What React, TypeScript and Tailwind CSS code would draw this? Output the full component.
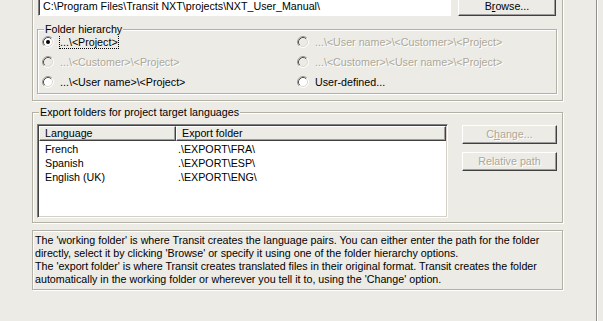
import React from 'react';

const PANEL = '#ecebe6';

const Radio = ({ checked = false, disabled = false }: { checked?: boolean; disabled?: boolean }) => (
  <svg width="12" height="12" viewBox="0 0 12 12" className="shrink-0">
    <circle cx="6" cy="6" r="5" fill={disabled ? PANEL : '#fff'} />
    <path d="M2.11 9.89 A5.5 5.5 0 0 1 9.89 2.11" fill="none" stroke="#9a9a9a" />
    <path d="M2.82 9.18 A4.5 4.5 0 0 1 9.18 2.82" fill="none" stroke="#505050" />
    <path d="M9.89 2.11 A5.5 5.5 0 0 1 2.11 9.89" fill="none" stroke="#fff" />
    <path d="M9.18 2.82 A4.5 4.5 0 0 1 2.82 9.18" fill="none" stroke="#dcdad2" />
    {checked && <circle cx="6" cy="6" r="2" fill="#000" />}
  </svg>
);

const Option = ({ label, checked, disabled, focused }: { label: string; checked?: boolean; disabled?: boolean; focused?: boolean }) => (
  <div className="flex items-center gap-[5px] h-[20px]">
    <Radio checked={checked} disabled={disabled} />
    <span
      className={`whitespace-nowrap border leading-[12px] ${focused ? 'border-dotted border-black' : 'border-transparent'} ${
        disabled ? 'text-[#aca899] [text-shadow:1px_1px_0_#fff]' : 'text-black'
      }`}
    >
      {label}
    </span>
  </div>
);

const etched = 'border border-[#b3b0a6] shadow-[inset_1px_1px_0_#fff,1px_1px_0_#fff]';
const raised =
  'border border-t-white border-l-white border-b-[#404040] border-r-[#404040] shadow-[inset_-1px_-1px_0_#9d9d9d]';

const rows = [
  { lang: 'French', folder: '.\\EXPORT\\FRA\\' },
  { lang: 'Spanish', folder: '.\\EXPORT\\ESP\\' },
  { lang: 'English (UK)', folder: '.\\EXPORT\\ENG\\' },
];

export default function App() {
  return (
    <div className="w-[603px] h-[321px] overflow-hidden bg-[#ecebe6] flex text-[10.7px] leading-[13px] text-black font-['Liberation_Sans',Arial,sans-serif]">
      <div className="w-[597px] h-full shrink-0 border-r border-r-[#8f8f8f] pl-[32px] pr-[33px]">
        {/* working folder */}
        <div className={`-mt-[20px] pt-[15px] pb-[6px] ${etched}`}>
          <div className="flex items-end gap-[7px] ml-[5px] h-[20px]">
            <div className="w-[413px] h-[20px] bg-white border border-t-[#808080] border-l-[#808080] border-b-white border-r-white shadow-[inset_1px_1px_0_#404040] flex items-center pl-[4px] pt-[1px] whitespace-nowrap">
              {'C:\\Program Files\\Transit NXT\\projects\\NXT_User_Manual\\'}
            </div>
            <div className={`w-[98px] h-[20px] flex items-center justify-center pt-[1px] ${raised}`}>
              B<span className="underline">r</span>owse...
            </div>
          </div>

          <div className={`relative mt-[13px] ml-[4px] mr-[5px] pt-[2px] pb-[1px] pl-[4px] ${etched}`}>
            <span className="absolute -top-[7px] left-[6px] px-[1px] bg-[#ecebe6]">Folder hierarchy</span>
            <div className="grid grid-cols-[255px_1fr]">
              <Option label={'...\\<Project>'} checked focused />
              <Option label={'...\\<User name>\\<Customer>\\<Project>'} disabled />
              <Option label={'...\\<Customer>\\<Project>'} disabled />
              <Option label={'...\\<Customer>\\<User name>\\<Project>'} disabled />
              <Option label={'...\\<User name>\\<Project>'} />
              <Option label="User-defined..." />
            </div>
          </div>
        </div>

        {/* export folders */}
        <div className={`relative mt-[11px] pt-[11px] pb-[4px] ${etched}`}>
          <span className="absolute -top-[7px] left-[6px] px-[1px] bg-[#ecebe6]">Export folders for project target languages</span>
          <div className="flex items-start">
            <div className="ml-[4px] w-[411px] h-[94px] bg-white border border-t-[#808080] border-l-[#808080] border-b-white border-r-white shadow-[inset_1px_1px_0_#404040,inset_-1px_-1px_0_#d4d0c8] p-[1px]">
              <div className="flex h-[15px] bg-[#ecebe6]">
                <div className={`w-[137px] pl-[5px] flex items-center ${raised}`}>Language</div>
                <div className={`flex-1 pl-[5px] flex items-center ${raised}`}>Export folder</div>
              </div>
              <div className="pt-[1px]">
                {rows.map((r) => (
                  <div key={r.lang} className="flex h-[14px] items-center whitespace-nowrap">
                    <div className="w-[139px] pl-[6px]">{r.lang}</div>
                    <div>{r.folder}</div>
                  </div>
                ))}
              </div>
            </div>
            <div className="ml-[14px] pt-[1px] flex flex-col gap-[8px] text-[#aca899] [text-shadow:1px_1px_0_#fff]">
              <div className={`w-[95px] h-[19px] flex items-center justify-center ${raised}`}>
                C<span className="underline">h</span>ange...
              </div>
              <div className={`w-[95px] h-[19px] flex items-center justify-center ${raised}`}>Relative path</div>
            </div>
          </div>
        </div>

        {/* help text */}
        <div className={`mt-[7px] pt-[3px] pb-[3px] pl-[2px] whitespace-nowrap ${etched}`}>
          The 'working folder' is where Transit creates the language pairs. You can either enter the path for the folder
          <br />
          directly, select it by clicking 'Browse' or specify it using one of the folder hierarchy options.
          <br />
          The 'export folder' is where Transit creates translated files in their original format. Transit creates the folder
          <br />
          automatically in the working folder or wherever you tell it to, using the 'Change' option.
        </div>
      </div>
      <div className="flex-1 border-l border-l-white" />
    </div>
  );
}
